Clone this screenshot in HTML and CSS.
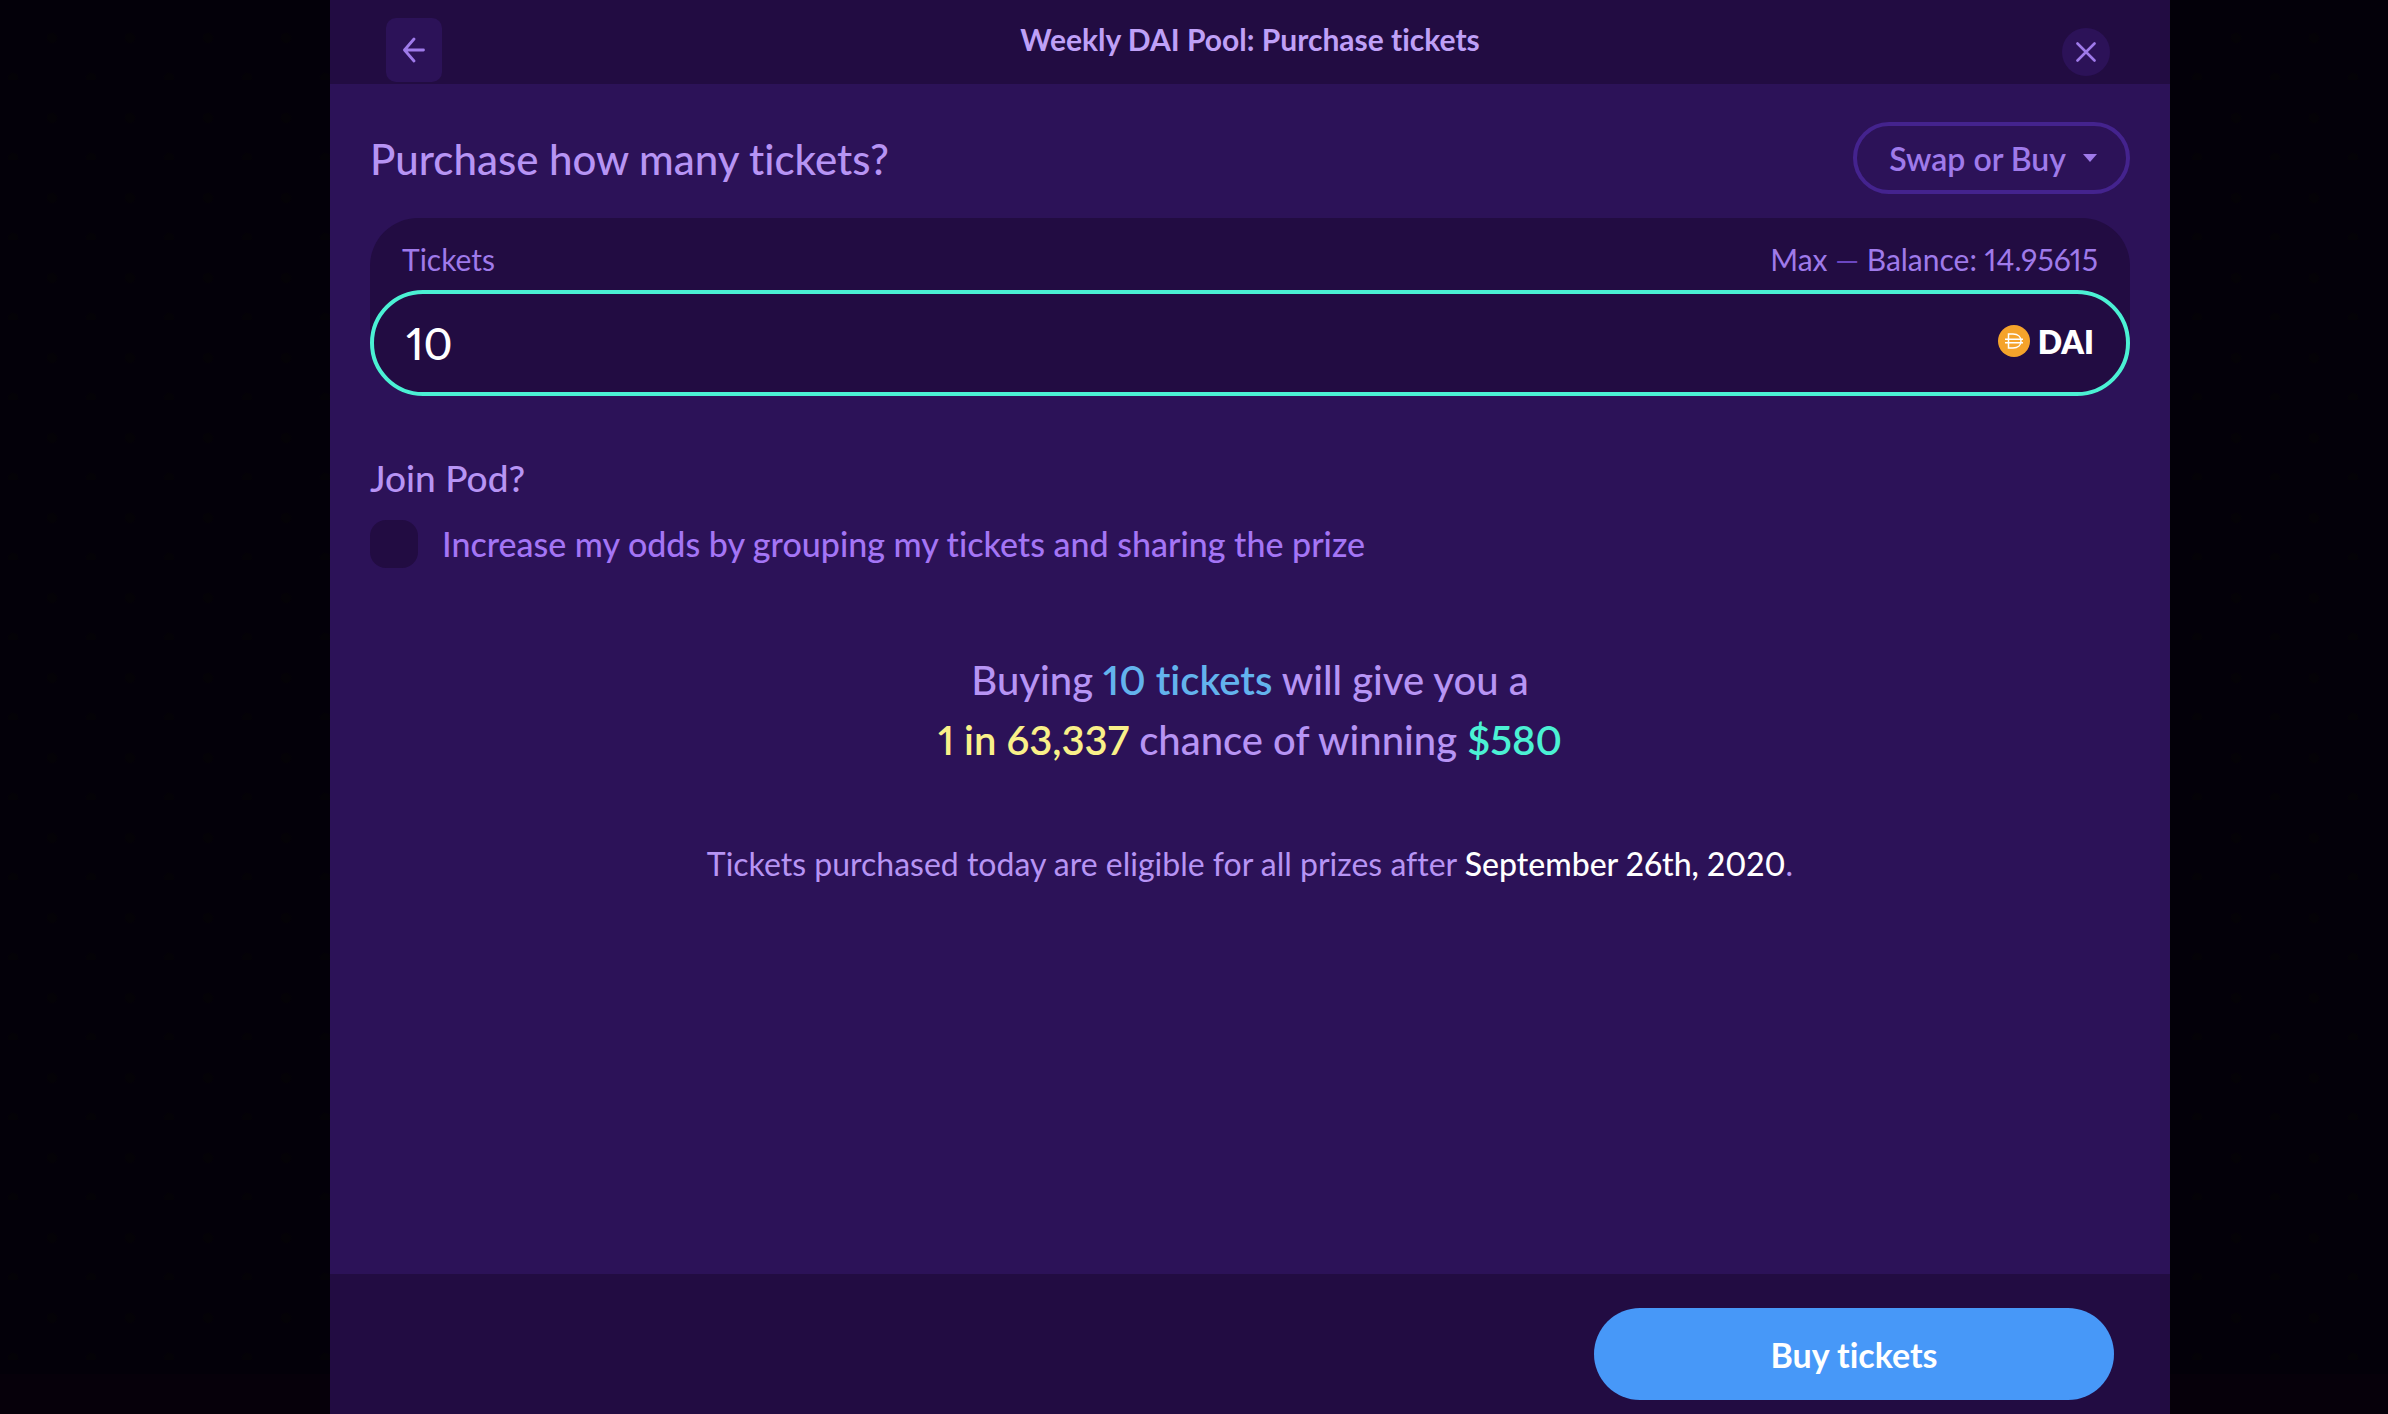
FILE: index.html
```html
<!DOCTYPE html>
<html lang="en">
<head>
  <meta charset="UTF-8">
  <meta name="viewport" content="width=device-width, initial-scale=1.0">
  <title>Weekly DAI Pool: Purchase tickets</title>
  <link rel="stylesheet" href="styles.css">
</head>
<body>
  <main class="dialog">
    <header class="dialog-header">
      <button type="button" class="back" aria-label="Back">
        <svg width="22" height="26" viewBox="0 0 22 26" fill="none" stroke="currentColor" stroke-width="2.8" stroke-linecap="round" stroke-linejoin="round"><path d="M20.500 13H1.500M11 2L1.500 13l9.500 11"/></svg>
      </button>
      <h1>Weekly DAI Pool: Purchase tickets</h1>
      <button type="button" class="close" aria-label="Close">
        <svg width="20" height="20" viewBox="0 0 20 20" fill="none" stroke="currentColor" stroke-width="2.6" stroke-linecap="round"><path d="M1.500 1.500l17 17M18.500 1.500l-17 17"/></svg>
      </button>
    </header>

    <form class="dialog-body" id="purchase">
      <div class="title-row">
        <h2>Purchase how many tickets?</h2>
        <button type="button" class="swap" aria-haspopup="true">
          Swap or Buy
          <svg width="16" height="8" viewBox="0 0 16 8" fill="currentColor"><path d="M1 0h14L8 8z"/></svg>
        </button>
      </div>

      <div class="amount">
        <div class="amount-labels">
          <label for="tickets">Tickets</label>
          <button type="button" class="max">Max <span class="dash">—</span> Balance: 14.95615</button>
        </div>
        <div class="amount-field">
          <input type="text" id="tickets" inputmode="numeric" value="10">
          <div class="currency">
            <svg width="32" height="32" viewBox="0 0 32 32" fill="none"><circle cx="16" cy="16" r="16" fill="#f5a32b"/><path d="M10.500 9h4.500c5 0 8 3 8 7s-3 7-8 7h-4.500zM7 14.200h18M7 17.800h18" stroke="#fff" stroke-width="1.5"/></svg>
            DAI
          </div>
        </div>
      </div>

      <h3>Join Pod?</h3>
      <div class="pod">
        <input type="checkbox" id="pod">
        <label for="pod">Increase my odds by grouping my tickets and sharing the prize</label>
      </div>

      <p class="odds">
        Buying <span class="blue">10 tickets</span> will give you a<br>
        <span class="yellow">1 in 63,337</span> chance of winning <span class="green">$580</span>
      </p>
      <p class="note">Tickets purchased today are eligible for all prizes after <span class="white">September 26th, 2020</span>.</p>
    </form>

    <footer class="dialog-footer">
      <button type="submit" form="purchase" class="buy">Buy tickets</button>
    </footer>
  </main>
</body>
</html>
```
FILE: styles.css
```css
* { box-sizing: border-box; }
body {
  margin: 0;
  background-color: #030009;
  background-image:
    linear-gradient(to top, #06000a 40px, transparent 40px),
    radial-gradient(circle at 52px 38px, #040207 4px, transparent 6px),
    radial-gradient(circle at 13px 78px, #040207 4px, transparent 6px);
  background-size: auto, 78px 80px, 78px 80px;
  background-repeat: no-repeat, repeat, repeat;
  font-family: Lato, sans-serif;
  font-variant-ligatures: none;
  font-variant-numeric: proportional-nums;
  color: #b794f4;
}
h1, h2, h3, p { margin: 0; font-weight: 500; }
button, input { font: inherit; font-variant: inherit; color: inherit; background: none; border: none; padding: 0; margin: 0; }
button { cursor: pointer; }
svg { display: block; flex: none; }

.dialog { min-height: 100vh; margin: 0 218px 0 330px; background: #2c1258; display: flex; flex-direction: column; }

.dialog-header { height: 84px; padding: 0 56px; background: #220c42; display: grid; grid-template-columns: 56px 1fr 56px; color: #9f7aea; }
.dialog-header h1 { font-size: 30px; line-height: 78px; font-weight: 700; text-align: center; color: #bfa0f7; }
.back { height: 64px; margin-top: 18px; background: #2c1258; border-radius: 10px; display: flex; align-items: center; justify-content: center; }
.close { width: 48px; height: 48px; margin-top: 28px; justify-self: center; background: #2c1258; border-radius: 50%; display: flex; align-items: center; justify-content: center; }

.dialog-body { flex: 1; padding: 38px 40px; }
.title-row { display: flex; align-items: center; justify-content: space-between; margin-bottom: 24px; }
h2 { padding-top: 2px; font-size: 42px; line-height: 70px; }
.swap { height: 72px; padding: 0 28px 0 32px; border: 4px solid #44238e; border-radius: 36px; display: flex; align-items: center; gap: 16px; font-size: 32px; font-weight: 600; color: #9f7aea; }

.amount { background: #220c42; border-radius: 48px 48px 53px 53px; color: #9f7aea; }
.amount-labels { height: 72px; padding: 10px 32px 0; display: flex; align-items: center; justify-content: space-between; font-size: 30px; }
.dash { color: #6b46c1; }
.amount-field { height: 106px; padding: 0 32px; border: 4px solid #4bf1d4; border-radius: 53px; display: flex; align-items: center; gap: 8px; color: #fff; }
.amount-field input { flex: 1; min-width: 0; font-size: 44px; font-weight: 500; outline: none; }
.currency { display: flex; align-items: center; gap: 8px; padding-bottom: 4px; font-size: 32px; font-weight: 800; }

h3 { margin-top: 58px; font-size: 37px; line-height: 48px; }
.pod { margin-top: 18px; display: flex; align-items: center; gap: 24px; font-size: 34px; line-height: 48px; font-weight: 500; color: #a475f5; }
.pod input { appearance: none; width: 48px; height: 48px; background: #220c42; border-radius: 16px; }

.odds { margin-top: 82px; font-size: 40px; line-height: 60px; text-align: center; }
.odds span { font-weight: 600; }
.blue { color: #63b3ed; }
.yellow { color: #faf089; }
.green { color: #4bf1d4; }
.white { color: #fff; font-weight: 500; }
.note { margin-top: 70px; font-size: 32px; line-height: 48px; font-weight: 400; text-align: center; }

.dialog-footer { height: 140px; padding: 34px 56px 14px; background: #220c42; display: flex; justify-content: flex-end; }
.buy { width: 520px; background: #4798f8; border-radius: 46px; font-size: 34px; font-weight: 700; color: #fff; }
```
